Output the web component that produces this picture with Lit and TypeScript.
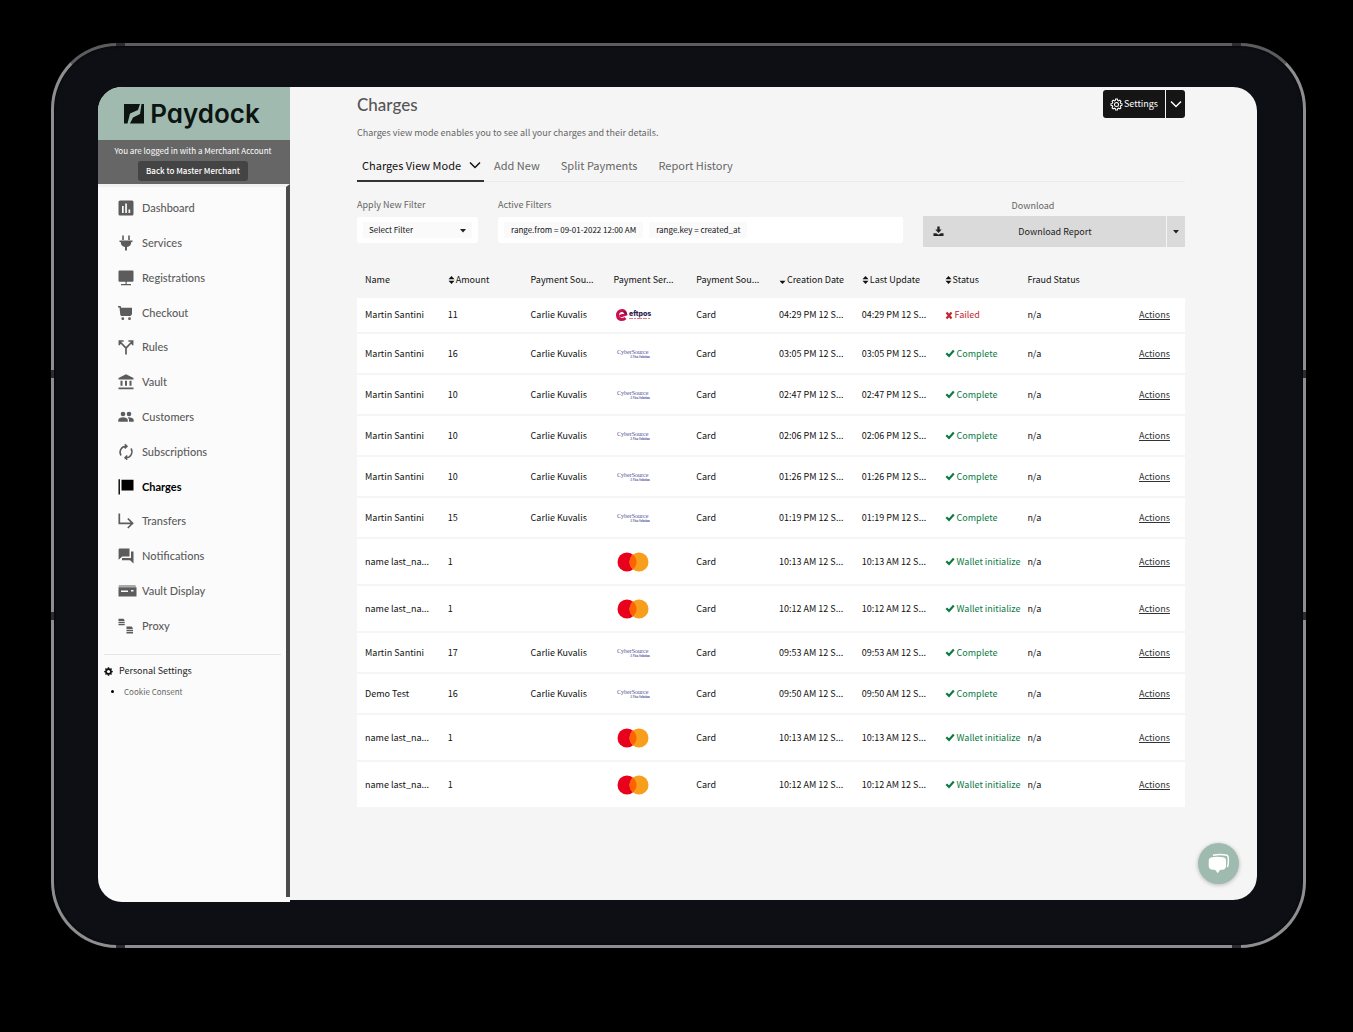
import { LitElement, html, css, svg, nothing, type TemplateResult } from "lit";
import { customElement, property } from "lit/decorators.js";
import { classMap } from "lit/directives/class-map.js";

interface NavItem {
  label: string;
  icon: TemplateResult;
  active?: boolean;
}

type Brand = "eftpos" | "cybersource" | "mastercard";
type Status = "Failed" | "Complete" | "Wallet initialize";

interface Charge {
  name: string;
  amount: number;
  source: string;
  brand: Brand;
  time: string;
  status: Status;
}

const navItems: NavItem[] = [
  {
    label: "Dashboard",
    icon: svg`<path fill-rule="evenodd" d="M2 0.5h12a1.5 1.5 0 0 1 1.500 1.500v12a1.500 1.500 0 0 1-1.500 1.500H2A1.500 1.500 0 0 1 .5 14V2A1.500 1.500 0 0 1 2 .5zM4 6v7h1.700V6zM7.200 3.500V13h1.700V3.500zM10.500 9.500V13h1.700V9.500z"/>`,
  },
  {
    label: "Services",
    icon: svg`<path d="M4.200.5h1.600V5H4.200zM10.200.5h1.600V5h-1.600zM1.500 5.500h13V7h-1.200c0 2.800-1.800 4.600-4.300 5v3.500H7V12c-2.500-.4-4.300-2.200-4.300-5H1.500z"/>`,
  },
  {
    label: "Registrations",
    icon: svg`<path d="M1.500.5h13a1 1 0 0 1 1 1v9.200a1 1 0 0 1-1 1h-13a1 1 0 0 1-1-1V1.500a1 1 0 0 1 1-1zM7.500 11.500h1.200V14H13v1.200H3V14h4.500z"/>`,
  },
  {
    label: "Checkout",
    icon: svg`<path d="M0 1h2.600l.6 1.800H14v6.400L12.500 11H3.200L2.300 10 1.500 2.400H0z"/><circle cx="4.800" cy="13.700" r="1.400"/><circle cx="11.500" cy="13.700" r="1.400"/>`,
  },
  {
    label: "Rules",
    icon: svg`<path fill="none" stroke="currentColor" stroke-width="1.700" d="M8 15.500V9.200L2.200 3M8 9.200L13.800 3M1.400 6.200V2h4.200M10.400 2h4.200v4.200"/>`,
  },
  {
    label: "Vault",
    icon: svg`<path d="M8 .3L15.500 4v1.600H.5V4zM2.500 6.800h2v5h-2zM7 6.800h2v5H7zM11.500 6.800h2v5h-2zM.5 13.500h15v1.800H.5z"/>`,
  },
  {
    label: "Customers",
    icon: svg`<circle cx="5" cy="5" r="2.300"/><circle cx="11" cy="5" r="2.300"/><path d="M.3 12.800V11c0-1.700 2.600-2.700 4.800-2.700s4.700 1 4.700 2.700v1.800zM11 12.800V11c0-1.100-.5-1.900-1.300-2.600 2.500-.3 6 .6 6 2.600v1.800z"/>`,
  },
  {
    label: "Subscriptions",
    icon: svg`<path fill="none" stroke="currentColor" stroke-width="1.500" d="M3 11.500A6 6 0 0 1 8.500 2.300M13 4.500a6 6 0 0 1-5.500 9.200M6.800.3l2.200 2L6.800 4.500M9.200 11.500L7 13.700l2.200 2"/>`,
  },
  {
    label: "Charges",
    active: true,
    icon: svg`<path d="M.5.300h1.400v15.200H.5zM3.500.700h12v10.800h-12z"/>`,
  },
  {
    label: "Transfers",
    icon: svg`<path fill="none" stroke="currentColor" stroke-width="1.700" d="M1.300.5v9.800H14M9.800 5.500l4.800 4.800-4.800 4.700"/>`,
  },
  {
    label: "Notifications",
    icon: svg`<path d="M1.300.5h10.200v8H4.200L.6 11.700V1.200zM13 3.500h2.500v12L12 12.300H4V10h9z"/>`,
  },
  {
    label: "Vault Display",
    icon: svg`<path fill-rule="evenodd" d="M1 2.500h16.500l.5 1H.5zM.5 4.200h18v9.300H.5zM3 7.500V9h7V7.500zM13 7V8.500h2.500V7z"/>`,
  },
  {
    label: "Proxy",
    icon: svg`<path d="M.5.800h5l1 1.200v1H.5zM.5 3.800h6.200V5H.5zM.5 5.800h6.200v1.400H.5zM8.500 8.600h5l1.200 1.200v1.200H8.500zM8.500 11.800h6.500V13H8.500zM8.500 13.800h6.500v1.600H8.500z"/>`,
  },
];

const wallet = (time: string): Charge => ({
  name: "name last_na...",
  amount: 1,
  source: "",
  brand: "mastercard",
  time,
  status: "Wallet initialize",
});

const card = (amount: number, time: string, name = "Martin Santini"): Charge => ({
  name,
  amount,
  source: "Carlie Kuvalis",
  brand: "cybersource",
  time,
  status: "Complete",
});

const charges: Charge[] = [
  { name: "Martin Santini", amount: 11, source: "Carlie Kuvalis", brand: "eftpos", time: "04:29 PM", status: "Failed" },
  card(16, "03:05 PM"),
  card(10, "02:47 PM"),
  card(10, "02:06 PM"),
  card(10, "01:26 PM"),
  card(15, "01:19 PM"),
  wallet("10:13 AM"),
  wallet("10:12 AM"),
  card(17, "09:53 AM"),
  card(16, "09:50 AM", "Demo Test"),
  wallet("10:13 AM"),
  wallet("10:12 AM"),
];

const columns: { label: string; sort?: "both" | "down" }[] = [
  { label: "Name" },
  { label: "Amount", sort: "both" },
  { label: "Payment Sou..." },
  { label: "Payment Ser..." },
  { label: "Payment Sou..." },
  { label: "Creation Date", sort: "down" },
  { label: "Last Update", sort: "both" },
  { label: "Status", sort: "both" },
  { label: "Fraud Status" },
];

const gearPath =
  "M6.800.5h2.400l.4 1.900 1.300.6 1.700-1.100 1.600 1.700-1 1.600.5 1.300 1.900.4v2.300l-1.900.4-.5 1.300 1 1.700-1.600 1.600-1.700-1.100-1.300.6-.4 1.900H6.800l-.4-1.900-1.300-.6-1.700 1.100-1.600-1.600 1-1.700-.5-1.300-1.900-.4V6.900l1.900-.4.5-1.300-1-1.600 1.600-1.700 1.700 1.100 1.300-.6z";

const base = css`
  * {
    box-sizing: border-box;
  }
  button {
    font: inherit;
    color: inherit;
    background: none;
    border: 0;
    padding: 0;
    cursor: pointer;
  }
  svg {
    display: block;
    flex: none;
  }
`;

@customElement("brand-mark")
export class BrandMark extends LitElement {
  @property() brand: Brand = "mastercard";

  static styles = [
    base,
    css`
      :host {
        display: block;
      }
      .serif {
        font-family: "Liberation Serif", serif;
        fill: #4b5093;
      }
      .sans {
        font-family: Inter, sans-serif;
        font-weight: 800;
        fill: #2d1c4e;
      }
    `,
  ];

  render() {
    if (this.brand === "eftpos") {
      return html`<svg width="40" height="16" viewBox="0 0 40 16" role="img" aria-label="eftpos">
        <path fill="none" stroke="#c8124f" stroke-width="3" d="M6.500 9.300L12.800 7.200C12.300 4.500 10.800 3.500 9 3.500A4.500 4.500 0 0 0 4.500 8.200C4.600 11 6.600 12.500 9 12.500 10.500 12.500 11.500 12 12.500 11"/>
        <path fill="none" stroke="#6d1450" stroke-width="1.500" d="M10.500 4.500Q13 5 13.500 7.500"/>
        <text class="sans" x="16" y="9" font-size="7">eftpos</text>
        <path stroke="#e07a8a" stroke-width="1" stroke-dasharray="4 1 2 1 5 1" d="M16 11.500h21"/>
      </svg>`;
    }
    if (this.brand === "cybersource") {
      return html`<svg width="40" height="16" viewBox="0 0 40 16" role="img" aria-label="CyberSource, a Visa solution">
        <text class="serif" x="4" y="8" font-size="6">CyberSource</text>
        <text class="serif" x="17" y="12" font-size="3" font-weight="bold">A Visa Solution</text>
      </svg>`;
    }
    return html`<svg width="40" height="20" viewBox="0 0 40 20" role="img" aria-label="Mastercard">
      <circle cx="14" cy="10" r="9.500" fill="#e8001c"/>
      <circle cx="26" cy="10" r="9.500" fill="#f79f1c"/>
      <path fill="#ff6200" d="M20 2.600a9.500 9.500 0 0 1 0 14.800 9.500 9.500 0 0 1 0-14.800z"/>
    </svg>`;
  }
}

@customElement("side-bar")
export class SideBar extends LitElement {
  static styles = [
    base,
    css`
      :host {
        display: flex;
        flex-direction: column;
        background: #fbfbfb;
      }
      .logo {
        display: flex;
        align-items: center;
        justify-content: center;
        gap: 6px;
        height: 53px;
        padding-right: 4px;
        background: #a0bab0;
        color: #0c1512;
        font: 600 26px/32px Inter, sans-serif;
        font-feature-settings: "cv11";
      }
      .merchant {
        display: flex;
        flex-direction: column;
        align-items: center;
        gap: 3px;
        height: 44px;
        padding: 4px 2px 0 0;
        background: #666;
        color: #fff;
        font-size: 8px;
        line-height: 14px;
        white-space: nowrap;
      }
      .back {
        padding: 3px 8px;
        border-radius: 3px;
        background: #444;
        font-weight: 500;
      }
      .body {
        flex: 1;
        margin-bottom: 5px;
        border-top: 3px solid #f1f1f1;
        border-right: 4px solid #4b4b4b;
      }
      .nav {
        display: grid;
        grid-auto-rows: 1fr;
        height: 452px;
        margin: 4px 0 0;
        padding: 0 0 0 20px;
        list-style: none;
      }
      .link {
        display: flex;
        align-items: center;
        gap: 8px;
        height: 100%;
        color: #5c5c5c;
        font: 500 11px/16px Lato, sans-serif;
        text-decoration: none;
      }
      .link.active {
        color: #000;
        font-weight: 700;
      }
      .link svg {
        overflow: visible;
      }
      .personal {
        margin: 11px 5px 0 6px;
        padding-top: 8px;
        border-top: 1px solid #e6e6e6;
        font-size: 9px;
        line-height: 16px;
      }
      .heading {
        display: flex;
        align-items: center;
        gap: 6px;
        margin: 0;
        color: #222;
        font: inherit;
      }
      .sub {
        margin: 5px 0 0;
        padding-left: 20px;
        font-size: 8px;
      }
      .sub a {
        color: #666;
        text-decoration: none;
      }
    `,
  ];

  render() {
    return html`
      <div class="logo">
        <svg width="20" height="20" viewBox="0 0 20 20" fill="currentColor" aria-hidden="true">
          <path d="M0 0h16l-2 6-8 3.500L3.500 19.500H0zM17.500 0H20v19.500H6L9 13.500l7-3.500z" />
        </svg>
        <span>Paydock</span>
      </div>
      <div class="merchant">
        <span>You are logged in with a Merchant Account</span>
        <button class="back">Back to Master Merchant</button>
      </div>
      <div class="body">
        <nav aria-label="Main">
          <ul class="nav">
            ${navItems.map(
              (item) => html`<li>
                <a class=${classMap({ link: true, active: !!item.active })} href="#${item.label}" aria-current=${item.active ? "page" : nothing}>
                  <svg width="16" height="16" viewBox="0 0 16 16" fill="currentColor" aria-hidden="true">${item.icon}</svg>
                  ${item.label}
                </a>
              </li>`
            )}
          </ul>
        </nav>
        <section class="personal">
          <h2 class="heading">
            <svg width="9" height="9" viewBox="0 0 16 16" aria-hidden="true">
              <path fill="#111" d=${gearPath} /><circle cx="8" cy="8" r="2.800" fill="#fbfbfb" />
            </svg>
            Personal Settings
          </h2>
          <ul class="sub"><li><a href="#cookies">Cookie Consent</a></li></ul>
        </section>
      </div>
    `;
  }
}

@customElement("charges-table")
export class ChargesTable extends LitElement {
  static styles = [
    base,
    css`
      :host {
        display: block;
      }
      .table {
        width: 100%;
        table-layout: fixed;
        border-collapse: separate;
        border-spacing: 0;
        color: #111;
        font-size: 9px;
        line-height: 14px;
      }
      th,
      td {
        padding: 0 0 0 8px;
        text-align: left;
        white-space: nowrap;
        font-weight: 400;
      }
      th {
        height: 36px;
      }
      .sort,
      .status {
        display: flex;
        align-items: center;
        gap: 1px;
      }
      td {
        background: #fff;
        border-bottom: 2px solid #f5f5f5;
      }
      .eftpos td {
        height: 36px;
      }
      .cybersource td {
        height: 41px;
      }
      .mastercard td {
        height: 47px;
      }
      td.state {
        color: #0b7a45;
      }
      .eftpos td.state {
        color: #c1272d;
      }
      td.actions {
        padding-right: 15px;
        text-align: right;
      }
      .actions a {
        color: #333;
        text-underline-offset: 1px;
      }
    `,
  ];

  private sortIcon(kind: "both" | "down") {
    return html`<svg width="7" height="10" viewBox="0 0 7 10" fill="#111" aria-hidden="true">
      ${kind === "both" ? svg`<path d="M3.500 1L6.500 4.300h-6z"/>` : nothing}
      <path d="M.5 5.700h6L3.500 9z" />
    </svg>`;
  }

  private statusIcon(status: Status) {
    return status === "Failed"
      ? html`<svg width="9" height="9" viewBox="0 0 9 9" aria-hidden="true"><path fill="none" stroke="currentColor" stroke-width="2.200" d="M1.500 1.500l5 6M6.500 1.500l-5 6"/></svg>`
      : html`<svg width="11" height="9" viewBox="0 0 11 9" aria-hidden="true"><path fill="none" stroke="currentColor" stroke-width="2.200" d="M1.300 4.300l2.700 2.600L8.800 1.600"/></svg>`;
  }

  render() {
    return html`<table class="table">
      <thead>
        <tr>
          ${columns.map(
            (c) => html`<th scope="col">${c.sort ? html`<button class="sort">${this.sortIcon(c.sort)}${c.label}</button>` : c.label}</th>`
          )}
          <th aria-label="Actions"></th>
        </tr>
      </thead>
      <tbody>
        ${charges.map(
          (c) => html`<tr class=${c.brand}>
            <td>${c.name}</td>
            <td>${c.amount}</td>
            <td>${c.source}</td>
            <td><brand-mark .brand=${c.brand}></brand-mark></td>
            <td>Card</td>
            <td>${c.time} 12 S...</td>
            <td>${c.time} 12 S...</td>
            <td class="state"><span class="status">${this.statusIcon(c.status)}${c.status}</span></td>
            <td>n/a</td>
            <td class="actions"><a href="#actions">Actions</a></td>
          </tr>`
        )}
      </tbody>
    </table>`;
  }
}

@customElement("app-root")
export class AppRoot extends LitElement {
  static styles = [
    base,
    css`
      :host {
        display: flex;
        min-height: 100vh;
        box-sizing: border-box;
        padding: 43px 47px 84px 51px;
        background: #000;
        font-family: "Noto Sans CJK SC", sans-serif;
      }
      .device {
        position: relative;
        flex: 1;
        display: flex;
        min-width: 0;
        padding: 41px 46px 43px 44px;
        border: 3px solid #8e8e90;
        border-top-color: #5c5c5f;
        border-radius: 66px;
        background: #0d0f14;
        box-shadow: inset 0 0 3px #000;
      }
      .seam {
        position: absolute;
        background: #2c2c2e;
      }
      .seam.flat {
        width: 9px;
        height: 3px;
      }
      .seam.tall {
        width: 3px;
        height: 8px;
      }
      .top {
        top: -3px;
      }
      .bottom {
        bottom: -3px;
      }
      .start {
        left: 62px;
      }
      .end {
        right: 62px;
      }
      .left {
        left: -3px;
      }
      .right {
        right: -3px;
      }
      .upper {
        top: 36%;
      }
      .lower {
        top: 63%;
      }
      .screen {
        position: relative;
        flex: 1;
        display: flex;
        min-width: 0;
        border-radius: 24px;
        overflow: hidden;
      }
      side-bar {
        flex: none;
        width: 192px;
      }
      .main {
        flex: 1;
        min-width: 0;
        margin-bottom: 2px;
        padding: 3px 72px 60px 67px;
        border-bottom-right-radius: 24px;
        background: #f5f5f5;
        color: #666;
      }
      .head {
        display: flex;
        justify-content: space-between;
        align-items: flex-start;
      }
      .title {
        margin: 3px 0 0;
        color: #555;
        font: 500 17px/24px Lato, sans-serif;
      }
      .lead {
        margin: 8px 0 0;
        font-size: 9px;
        line-height: 16px;
      }
      .settings {
        display: flex;
        gap: 1px;
        height: 28px;
        color: #fff;
        font-size: 9px;
        line-height: 16px;
      }
      .settings button {
        display: flex;
        align-items: center;
        justify-content: center;
        gap: 1px;
        background: #151515;
      }
      .config {
        width: 62px;
        border-radius: 3px 0 0 3px;
      }
      .more {
        width: 19px;
        border-radius: 0 3px 3px 0;
      }
      .tabs {
        display: flex;
        gap: 21px;
        margin-top: 8px;
        border-bottom: 1px solid #ebebeb;
        font-size: 11px;
        line-height: 16px;
      }
      .tabs button {
        padding: 6px 0 8px;
        margin-bottom: -1px;
      }
      .tabs .current {
        display: flex;
        align-items: center;
        gap: 8px;
        margin-right: -11px;
        padding: 8px 3px 7px 5px;
        border-bottom: 2px solid #333;
        color: #111;
      }
      .filters {
        display: grid;
        grid-template-columns: 121px 1fr 262px;
        gap: 20px;
        margin-top: 15px;
        font-size: 9px;
        line-height: 16px;
      }
      .field {
        display: flex;
        flex-direction: column;
        gap: 4px;
      }
      .box {
        display: flex;
        align-items: center;
        gap: 6px;
        height: 26px;
        padding: 0 6px;
        border-radius: 2px;
        background: #fff;
        color: #111;
      }
      .chip {
        padding: 0 7px;
        background: #fafafa;
        font-size: 8px;
      }
      .picker {
        flex: 1;
        min-width: 0;
        padding: 0 6px;
        border: 0;
        appearance: none;
        background: #fafafa;
        color: #111;
        font: inherit;
        font-size: 8px;
      }
      .pick {
        position: relative;
      }
      .pick svg {
        position: absolute;
        right: 12px;
        top: 12px;
        pointer-events: none;
      }
      .download {
        display: flex;
        gap: 1px;
        height: 31px;
        color: #222;
      }
      .download button {
        display: flex;
        align-items: center;
        justify-content: center;
        background: #dadada;
      }
      .download .report {
        flex: 1;
        padding-left: 10px;
      }
      .report span {
        flex: 1;
      }
      .download .choose {
        width: 18px;
      }
      .caption {
        text-align: center;
        padding-right: 42px;
      }
      .field.save {
        gap: 2px;
        padding-top: 1px;
      }
      charges-table {
        margin-top: 15px;
      }
      .tabs,
      .lead {
        position: static;
      }
      .chat {
        position: absolute;
        right: 18px;
        bottom: 18px;
        display: flex;
        align-items: center;
        justify-content: center;
        width: 41px;
        height: 41px;
        border-radius: 50%;
        background: #9fbaae;
        box-shadow: 0 1px 4px #0004;
      }
    `,
  ];

  private chevron(size: number) {
    return html`<svg width=${size} height=${size} viewBox="0 0 12 12" fill="none" stroke="currentColor" stroke-width="1.500" aria-hidden="true"><path d="M1 3.500l5 5 5-5"/></svg>`;
  }

  private caret() {
    return html`<svg width="6" height="4" viewBox="0 0 6 4" fill="#222" aria-hidden="true"><path d="M0 0h6L3 3.500z"/></svg>`;
  }

  render() {
    return html`
      <div class="device">
        <i class="seam flat top start"></i><i class="seam flat top end"></i>
        <i class="seam flat bottom start"></i><i class="seam flat bottom end"></i>
        <i class="seam tall left upper"></i><i class="seam tall left lower"></i>
        <i class="seam tall right upper"></i><i class="seam tall right lower"></i>
        <div class="screen">
          <side-bar></side-bar>
          <main class="main">
            <header class="head">
              <div>
                <h1 class="title">Charges</h1>
                <p class="lead">Charges view mode enables you to see all your charges and their details.</p>
              </div>
              <div class="settings">
                <button class="config">
                  <svg width="13" height="13" viewBox="-1 -1 18 18" fill="none" stroke="#fff" stroke-width="1.400" aria-hidden="true">
                    <path d=${gearPath} /><circle cx="8" cy="8" r="2.800" />
                  </svg>
                  Settings
                </button>
                <button class="more" aria-label="More settings">${this.chevron(12)}</button>
              </div>
            </header>
            <div class="tabs">
              <button class="current">Charges View Mode ${this.chevron(12)}</button>
              <button>Add New</button>
              <button>Split Payments</button>
              <button>Report History</button>
            </div>
            <div class="filters">
              <div class="field">
                <label for="filter">Apply New Filter</label>
                <div class="box pick">
                  <select class="picker" id="filter"><option>Select Filter</option></select>
                  ${this.caret()}
                </div>
              </div>
              <div class="field">
                <span>Active Filters</span>
                <div class="box">
                  <span class="chip">range.from = 09-01-2022 12:00 AM</span>
                  <span class="chip">range.key = created_at</span>
                </div>
              </div>
              <div class="field save">
                <span class="caption">Download</span>
                <div class="download">
                  <button class="report">
                    <svg width="11" height="11" viewBox="0 0 12 12" fill="#222" aria-hidden="true">
                      <path d="M4.700.5h2.600v3.300h2.200L6 7.500 2.500 3.800h2.200zM.5 7.800h3L6 9.500l2.500-1.700h3v3.200H.5z"/>
                    </svg>
                    <span>Download Report</span>
                  </button>
                  <button class="choose" aria-label="Choose report">${this.caret()}</button>
                </div>
              </div>
            </div>
            <charges-table></charges-table>
          </main>
          <button class="chat" aria-label="Open chat">
            <svg width="22" height="22" viewBox="0 0 22 22" aria-hidden="true">
              <path fill="none" stroke="#fff" stroke-width="1.500" d="M5 2.200Q12 .6 19 2.200 20.500 3 20.300 6.500 20.500 11 19.500 14"/>
              <path fill="#fff" d="M3 4.500q6.500-1.300 13 0 2 .5 2 3v5.800q0 2.800-2 3.200l-4 .5-2.200 3.200-2.500-3.200-4.300-.5Q.700 16 .700 13.300V7.500q0-2.500 2.300-3z"/>
            </svg>
          </button>
        </div>
      </div>
    `;
  }
}
